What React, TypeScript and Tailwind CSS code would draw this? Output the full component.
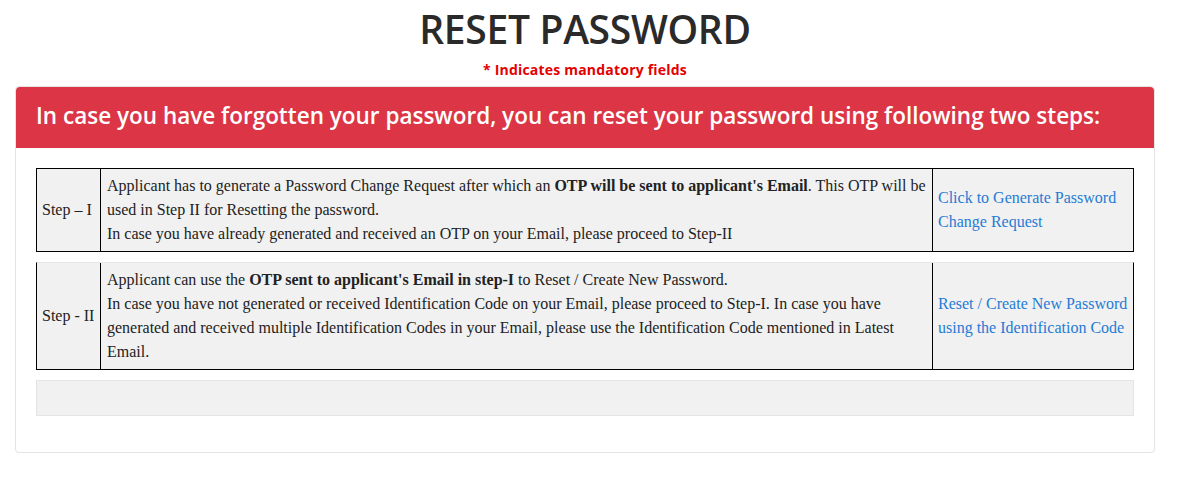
import React from "react";

const serif = { fontFamily: '"Liberation Serif", "Times New Roman", serif' };

export default function App() {
  return (
    <div className="min-h-[499px] bg-white" style={{ fontFamily: '"Open Sans", "Noto Sans", sans-serif' }}>
      <div className="ml-[15px] w-[1140px]">
        <h1 className="pt-[5px] text-center text-[39px] leading-[48px] font-semibold tracking-[-0.3px] text-[#2a2a2a]">RESET PASSWORD</h1>
        <p className="mt-[7px] text-center text-[14px] leading-[20px] font-bold tracking-[0.2px] text-[#e50000]">* Indicates mandatory fields</p>
        <div className="mt-[6px] rounded-[4px] border border-[#e3e3e3]">
          <div className="flex h-[61px] items-center rounded-t-[4px] bg-[#dc3545] pb-[4px] pl-[20px]">
            <h2 className="text-[22.5px] font-semibold text-white">In case you have forgotten your password, you can reset your password using following two steps:</h2>
          </div>
          <div className="px-[20px] pt-[20px] pb-[36px] text-[16px] leading-[24px] text-[#222]" style={serif}>
            <div className="grid grid-cols-[64px_832px_201px] border border-black bg-[#f1f1f1]">
              <div className="flex items-center whitespace-nowrap border-r border-black px-[5px] py-[5px]">Step – I</div>
              <div className="border-r border-black px-[6px] py-[5px]">
                Applicant has to generate a Password Change Request after which an <b>OTP will be sent to applicant's Email</b>. This OTP will be used in Step II for Resetting the password.
                <br />
                In case you have already generated and received an OTP on your Email, please proceed to Step-II
              </div>
              <div className="flex items-center whitespace-nowrap px-[5px] py-[5px] text-[#1f7bd5]">
                <span>
                  Click to Generate Password
                  <br />
                  Change Request
                </span>
              </div>
            </div>
            <div className="mt-[10px] grid grid-cols-[64px_832px_201px] border-x border-b border-t border-x-black border-b-black border-t-[#e6e6e6] bg-[#f1f1f1]">
              <div className="flex items-center whitespace-nowrap border-r border-black px-[5px] py-[5px]">Step - II</div>
              <div className="border-r border-black px-[6px] py-[5px]">
                Applicant can use the <b>OTP sent to applicant's Email in step-I</b> to Reset / Create New Password.
                <br />
                In case you have not generated or received Identification Code on your Email, please proceed to Step-I. In case you have generated and received multiple Identification Codes in your Email, please use the Identification Code mentioned in Latest Email.
              </div>
              <div className="flex items-center whitespace-nowrap px-[5px] py-[5px] text-[#1f7bd5]">
                <span>
                  Reset / Create New Password
                  <br />
                  using the Identification Code
                </span>
              </div>
            </div>
            <div className="mt-[10px] h-[36px] border border-[#e4e4e4] bg-[#f1f1f1]" />
          </div>
        </div>
      </div>
    </div>
  );
}
